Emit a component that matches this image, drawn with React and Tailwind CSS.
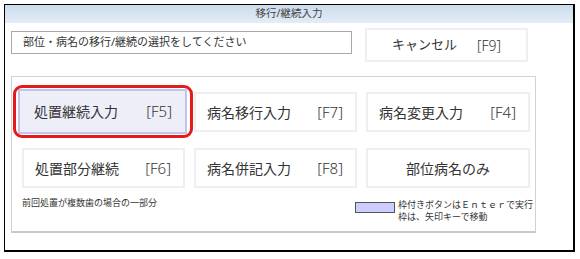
const jp = "font-['Noto_Sans','Noto_Sans_CJK_JP',sans-serif]";

function KeyButton({ label, fkey, selected }) {
    if (selected) {
        return (
            <div className="relative -mt-[3px] -mb-[2px] -ml-[4px] -mr-[2px]">
                <div className="flex h-full items-center justify-between border-2 border-[#c3c3ec] bg-[#eeeef9] pl-[14px] pr-[13px] text-[14px] text-[#333]">
                    <span>{label}</span>
                    <span className="text-[15px] font-light">{fkey}</span>
                </div>
                <div className="pointer-events-none absolute -left-[5px] -right-[6px] -top-[4px] -bottom-[4px] rounded-[9px] border-[3px] border-[#e41b1b]" />
            </div>
        );
    }
    return (
        <div
            className={
                "flex items-center border-2 border-[#efefef] bg-white text-[14px] text-[#333] " +
                (fkey ? "justify-between pl-[11px] pr-[12px]" : "justify-center")
            }
        >
            <span>{label}</span>
            {fkey && <span className="text-[15px] font-light">{fkey}</span>}
        </div>
    );
}

export default function App() {
    return (
        <div className={`w-[580px] h-[259px] overflow-hidden bg-white pt-[4px] pl-[4px] ${jp}`}>
            <div className="flex h-[248px] w-[571px] flex-col border-l border-t border-r-2 border-b-2 border-black">
                {/* title bar */}
                <div className="flex h-[18px] items-center justify-center bg-linear-to-b from-[#cbdbec] to-[#e4edf7] text-[10.5px] text-[#444]">
                    移行/継続入力
                </div>

                <div className="flex items-start px-[6px]">
                    <div className="mt-[8px] flex h-[23px] w-[341px] items-center border border-[#a9a9a9] pl-[11px] text-[11px] text-[#333]">
                        部位・病名の移行/継続の選択をしてください
                    </div>
                    <div className="ml-[13px] mt-[5px] flex h-[34px] w-[163px] items-center gap-[20px] border-2 border-[#efefef] pl-[25px] text-[13px] text-[#333]">
                        <span>キャンセル</span>
                        <span className="text-[14px] font-light">[F9]</span>
                    </div>
                </div>

                {/* group box */}
                <div className="ml-[6px] mt-[14px] flex h-[157px] w-[525px] flex-col border border-b-2 border-[#d2d2d2] border-b-[#c9c9c9]">
                    <div className="mt-[15px] grid grid-cols-[163px_163px_164px] grid-rows-[40px_40px] gap-x-[9px] gap-y-[16px] pl-[10px]">
                        <KeyButton label="処置継続入力" fkey="[F5]" selected />
                        <KeyButton label="病名移行入力" fkey="[F7]" />
                        <KeyButton label="病名変更入力" fkey="[F4]" />
                        <KeyButton label="処置部分継続" fkey="[F6]" />
                        <KeyButton label="病名併記入力" fkey="[F8]" />
                        <KeyButton label="部位病名のみ" />
                    </div>
                    <div className="mt-[9px] flex items-start pl-[10px] pr-[2px]">
                        <span className="text-[9px] leading-[12px] text-[#333]">前回処置が複数歯の場合の一部分</span>
                        <div className="ml-auto mt-[2px] flex items-start gap-[3px]">
                            <div className="mt-[3px] h-[11px] w-[40px] border border-[#555] bg-[#ccccff]" />
                            <div className="text-[9px] leading-[12px] text-[#333]">
                                <div>枠付きボタンはＥｎｔｅｒで実行</div>
                                <div>枠は、矢印キーで移動</div>
                            </div>
                        </div>
                    </div>
                </div>
            </div>
        </div>
    );
}
